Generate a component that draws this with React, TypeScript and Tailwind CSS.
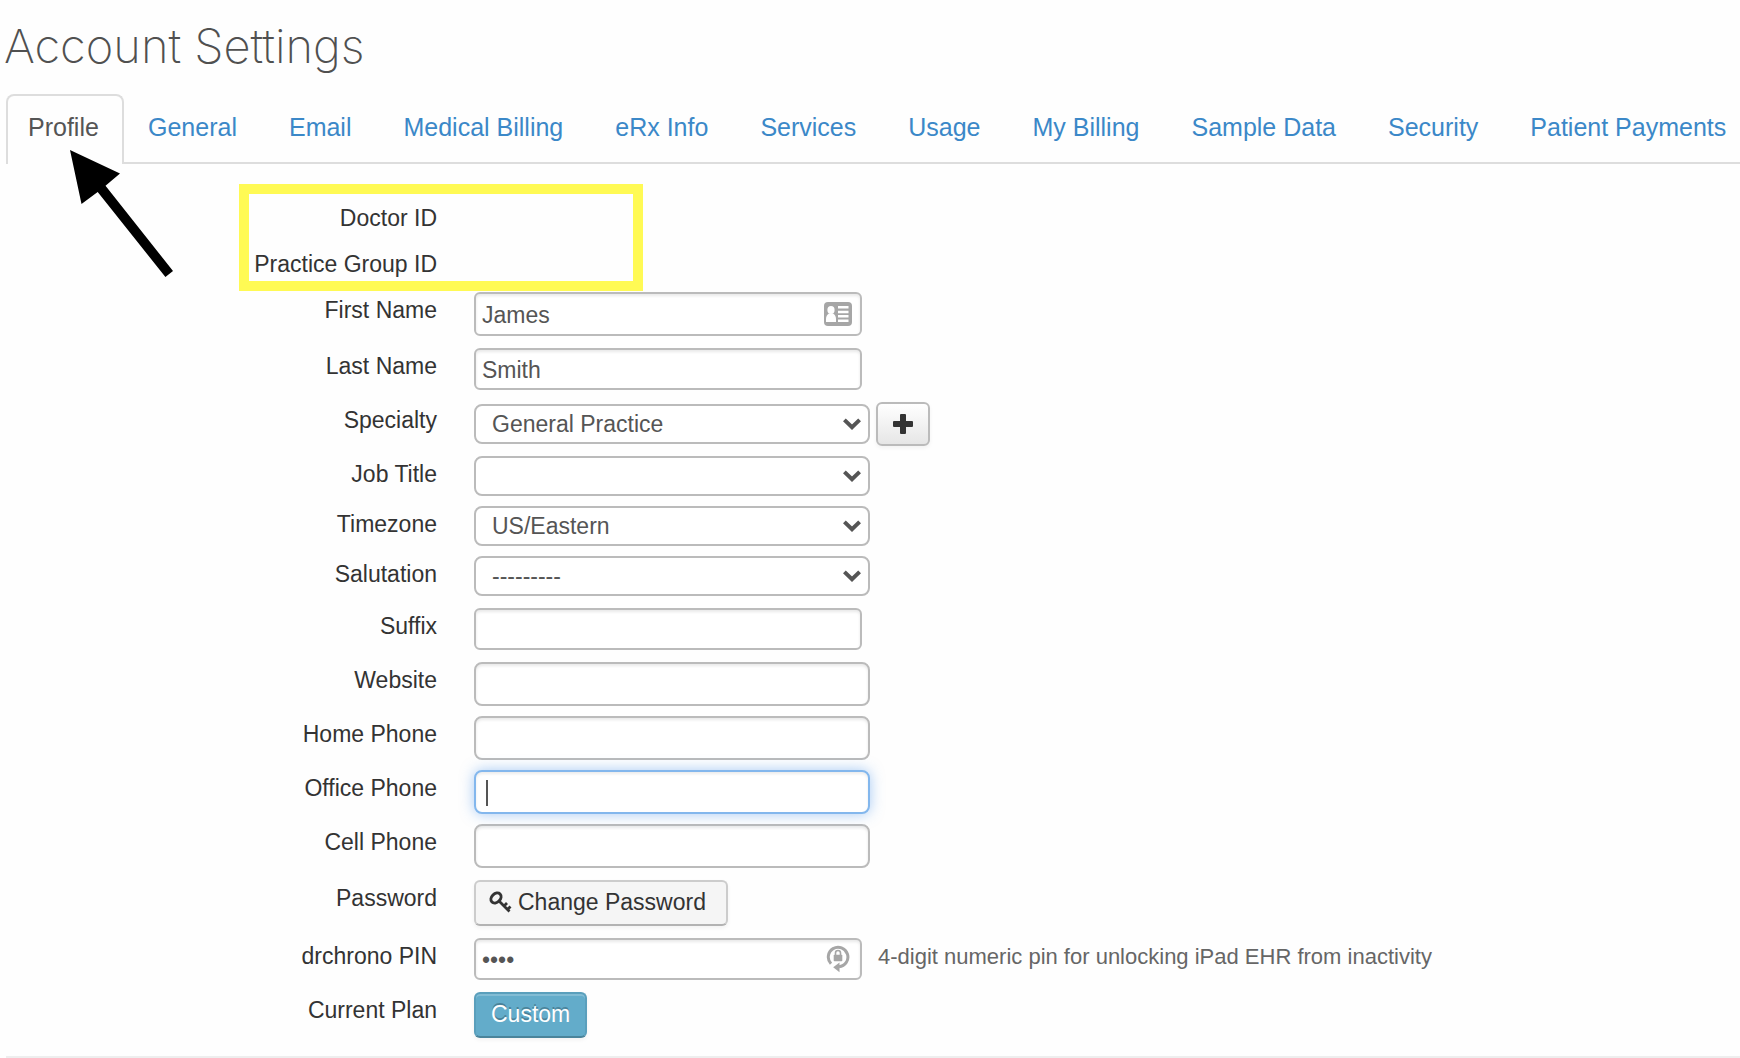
import React from "react";

const tabs = ["General", "Email", "Medical Billing", "eRx Info", "Services", "Usage", "My Billing", "Sample Data", "Security", "Patient Payments"];

const fieldBase = "block border-2 border-[#bbb] bg-white pt-0.5 pl-1.5 text-[23px] text-[#555] outline-none shadow-[inset_0_2px_3px_rgba(0,0,0,0.09)]";

function Row({ id, label, className = "mb-3", children }: { id: string; label: string; className?: string; children?: React.ReactNode }) {
  return (
    <div className={`flex items-start ${className}`}>
      <label htmlFor={id} className="w-[431px] shrink-0 text-right text-[23px] leading-9 text-[#333]">{label}</label>
      <div className="ml-[37px] flex items-center">{children}</div>
    </div>
  );
}

function Select({ id, value }: { id: string; value: string }) {
  return (
    <div className="relative w-[396px]">
      <select id={id} className="block h-10 w-full appearance-none rounded-lg border-2 border-[#bbb] bg-white pl-4 text-[23px] leading-9 text-[#555] outline-none">
        <option>{value}</option>
      </select>
      <svg className="pointer-events-none absolute top-3 right-2 h-4 w-5" viewBox="0 0 20 16" fill="none" stroke="#555" strokeWidth="4">
        <path d="M2.4 3.9 10 11.2 17.6 3.9" />
      </svg>
    </div>
  );
}

function CardIcon() {
  return (
    <svg className="pointer-events-none absolute top-2.5 right-2.5 h-6 w-7" viewBox="0 0 28 24">
      <rect width="28" height="24" rx="4" fill="#a6a6a6" />
      <g fill="#fff">
        <ellipse cx="7" cy="8" rx="3.600" ry="4" />
        <path d="M2 20v-3q0-4 3-5.500h4q3 1.500 3 5.500v3z" />
        <path d="M14 4h10.500v2.500H14zM14 8.800h10.500v2.500H14zM14 13h10.500v2.500H14zM14 17.500h10.500V20H14z" />
      </g>
    </svg>
  );
}

function LockIcon() {
  return (
    <svg className="pointer-events-none absolute top-1 right-3 h-[31px] w-6" viewBox="0 0 24 31">
      <path d="M5 21.800A9.800 9.800 0 1 1 13 24.800" fill="none" stroke="#a6a6a6" strokeWidth="3" />
      <path d="M7.200 25.300 13.500 20.500v9.800z" fill="#a6a6a6" />
      <rect x="7.700" y="12.800" width="8.600" height="6.400" rx="0.800" fill="#a6a6a6" />
      <path d="M9.500 13v-2a2.500 2.500 0 0 1 5 0V13" fill="none" stroke="#a6a6a6" strokeWidth="1.600" />
    </svg>
  );
}

function KeyIcon() {
  return (
    <svg className="h-6 w-6" viewBox="0 0 24 24" fill="none" stroke="#333" strokeWidth="3">
      <ellipse cx="8" cy="8" rx="5.700" ry="4.300" transform="rotate(-45 8 8)" />
      <path d="M11 11l10.500 10.500M16 16l3-3M19.500 19.500l3-3" strokeWidth="2.800" />
    </svg>
  );
}

export default function App() {
  return (
    <main className="relative min-h-[1058px] bg-[#fefefe] font-['Liberation_Sans',Arial,sans-serif]">
      <h1 className="pt-4 pl-1 font-['Inter',sans-serif] text-[47px] leading-[60px] font-extralight text-[#505050]">Account Settings</h1>
      <nav className="mt-4 ml-1.5 flex items-end border-b-2 border-[#ddd] text-[25px] leading-[38px] whitespace-nowrap">
        <a href="#profile" aria-current="page" className="-mb-0.5 h-[70px] w-[118px] rounded-t-lg border-2 border-b-0 border-[#ddd] bg-[#fefefe] pt-3 pl-5 text-[#555]">Profile</a>
        <div className="flex h-[70px] flex-1 gap-[52px] pt-4 pl-6">
          {tabs.map((t) => <a key={t} href={`#${t}`} className="text-[#3b88c8]">{t}</a>)}
        </div>
      </nav>
      <svg className="pointer-events-none absolute top-[150px] left-[70px] h-[128px] w-[104px]" viewBox="0 0 104 128">
        <path d="M0 0 50 23.500 35.500 35.700 103 121 95.400 127 27.700 42 11.500 54z" />
      </svg>
      <form className="ml-1.5 pt-9">
        <div className="relative">
          <div className="pointer-events-none absolute -top-4 left-[233px] h-[107px] w-[404px] border-10 border-[#fffa54]" />
          <Row id="doctor" label="Doctor ID" className="h-[46px]"><output id="doctor" /></Row>
          <Row id="group" label="Practice Group ID" className="h-[46px]"><output id="group" /></Row>
        </div>
        <Row id="first" label="First Name">
          <div className="relative">
            <input id="first" defaultValue="James" className={`${fieldBase} h-11 w-[388px] rounded-md`} />
            <CardIcon />
          </div>
        </Row>
        <Row id="last" label="Last Name"><input id="last" defaultValue="Smith" className={`${fieldBase} h-[42px] w-[388px] rounded-md`} /></Row>
        <Row id="specialty" label="Specialty" className="mb-2.5">
          <Select id="specialty" value="General Practice" />
          <button type="button" aria-label="Add specialty" className="ml-1.5 flex h-11 w-[54px] items-center justify-center rounded-md border-2 border-[#bbb] bg-linear-to-b from-white to-[#e6e6e6] shadow-[0_2px_4px_rgba(0,0,0,0.05)]">
            <svg className="h-5 w-5" viewBox="0 0 20 20" fill="#333"><path d="M8 0h4q1 0 1 1v6h6q1 0 1 1v4q0 1-1 1h-6v6q0 1-1 1H8q-1 0-1-1v-6H1q-1 0-1-1V8q0-1 1-1h6V1q0-1 1-1z" /></svg>
          </button>
        </Row>
        <Row id="job" label="Job Title" className="mb-2.5"><Select id="job" value="" /></Row>
        <Row id="tz" label="Timezone" className="mb-2.5"><Select id="tz" value="US/Eastern" /></Row>
        <Row id="salutation" label="Salutation"><Select id="salutation" value="---------" /></Row>
        <Row id="suffix" label="Suffix"><input id="suffix" className={`${fieldBase} h-[42px] w-[388px] rounded-md`} /></Row>
        <Row id="website" label="Website" className="mb-2.5"><input id="website" className={`${fieldBase} h-11 w-[396px] rounded-lg`} /></Row>
        <Row id="home" label="Home Phone" className="mb-2.5"><input id="home" className={`${fieldBase} h-11 w-[396px] rounded-lg`} /></Row>
        <Row id="office" label="Office Phone" className="mb-2.5">
          <div className="relative">
            <input id="office" className="block h-11 w-[396px] rounded-lg border-2 border-[#83b7ed] bg-white pl-3 text-[23px] text-[#555] caret-transparent outline-none shadow-[inset_0_2px_3px_rgba(0,0,0,0.08),0_0_14px_rgba(82,152,236,0.5)]" />
            <span className="absolute top-2.5 left-3 h-[26px] w-0.5 bg-[#555]" />
          </div>
        </Row>
        <Row id="cell" label="Cell Phone"><input id="cell" className={`${fieldBase} h-11 w-[396px] rounded-lg`} /></Row>
        <Row id="password" label="Password">
          <button id="password" type="button" className="flex h-[46px] items-center gap-1.5 rounded-md border-2 border-[#ccc] border-b-[#b3b3b3] bg-[#f5f5f5] pr-5 pb-0.5 pl-3 text-[23px] text-[#333] shadow-[0_2px_4px_rgba(0,0,0,0.05)]"><KeyIcon />Change Password</button>
        </Row>
        <Row id="pin" label="drchrono PIN">
          <div className="relative">
            <input id="pin" type="password" defaultValue="1234" className={`${fieldBase} h-[42px] w-[388px] rounded-md`} />
            <LockIcon />
          </div>
          <span className="-mt-1 ml-4 text-[22px] leading-8 text-[#666]">4-digit numeric pin for unlocking iPad EHR from inactivity</span>
        </Row>
        <Row id="plan" label="Current Plan" className="">
          <button id="plan" type="button" className="h-[46px] rounded-md border-2 border-[#5a9fbc] border-b-[#4a849b] bg-[#63acca] px-[15px] pb-0.5 text-[23px] text-white shadow-[inset_0_2px_0_rgba(255,255,255,0.2),0_2px_4px_rgba(0,0,0,0.05)] text-shadow-[0_-2px_0_rgba(0,0,0,0.25)]">Custom</button>
        </Row>
        <hr className="mt-[18px] border-t-2 border-[#eee]" />
      </form>
    </main>
  );
}
